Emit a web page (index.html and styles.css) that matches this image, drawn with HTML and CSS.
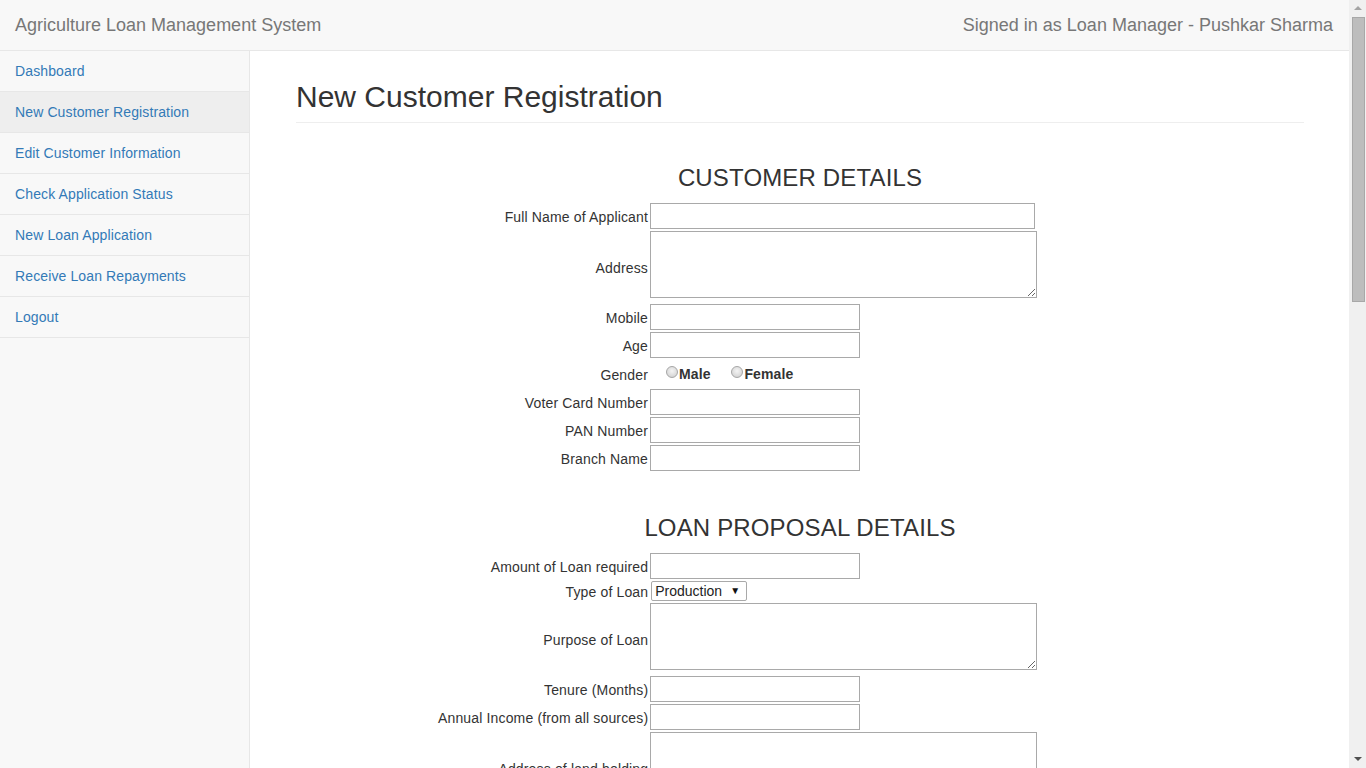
FILE: index.html
```html
<!DOCTYPE html>
<html lang="en">
<head>
<meta charset="utf-8">
<title>Agriculture Loan Management System</title>
<link rel="stylesheet" href="styles.css">
</head>
<body>
<header class="navbar">
  <span class="brand">Agriculture Loan Management System</span>
  <span class="signed">Signed in as Loan Manager - Pushkar Sharma</span>
</header>
<div class="layout">
  <nav class="sidebar">
    <ul class="nav">
      <li><a href="#">Dashboard</a></li>
      <li class="active"><a href="#">New Customer Registration</a></li>
      <li><a href="#">Edit Customer Information</a></li>
      <li><a href="#">Check Application Status</a></li>
      <li><a href="#">New Loan Application</a></li>
      <li><a href="#">Receive Loan Repayments</a></li>
      <li><a href="#">Logout</a></li>
    </ul>
  </nav>
  <main class="main">
    <h2 class="page-header">New Customer Registration</h2>
    <form class="reg-form">
      <h3 class="section-title">CUSTOMER DETAILS</h3>
      <table class="form-table">
        <tr><td class="lbl">Full Name of Applicant</td><td><input class="inp wide" type="text"></td></tr>
        <tr><td class="lbl">Address</td><td><textarea class="area"></textarea></td></tr>
        <tr><td class="lbl">Mobile</td><td><input class="inp" type="text"></td></tr>
        <tr><td class="lbl">Age</td><td><input class="inp" type="text"></td></tr>
        <tr class="gender-row"><td class="lbl">Gender</td><td class="radios">
          <label class="radio"><input type="radio" name="g">Male</label>
          <label class="radio"><input type="radio" name="g">Female</label>
        </td></tr>
        <tr><td class="lbl">Voter Card Number</td><td><input class="inp" type="text"></td></tr>
        <tr><td class="lbl">PAN Number</td><td><input class="inp" type="text"></td></tr>
        <tr><td class="lbl">Branch Name</td><td><input class="inp" type="text"></td></tr>
      </table>
      <h3 class="section-title">LOAN PROPOSAL DETAILS</h3>
      <table class="form-table">
        <tr><td class="lbl">Amount of Loan required</td><td><input class="inp" type="text"></td></tr>
        <tr class="select-row"><td class="lbl">Type of Loan</td><td class="selcell">
          <span class="select-wrap"><select class="sel"><option>Production</option><option>Investment</option></select></span>
        </td></tr>
        <tr><td class="lbl">Purpose of Loan</td><td><textarea class="area"></textarea></td></tr>
        <tr><td class="lbl">Tenure (Months)</td><td><input class="inp" type="text"></td></tr>
        <tr><td class="lbl">Annual Income (from all sources)</td><td><input class="inp" type="text"></td></tr>
        <tr><td class="lbl">Address of land holding</td><td><textarea class="area"></textarea></td></tr>
        <tr><td class="lbl">Area of land (Acres)</td><td><input class="inp" type="text"></td></tr>
        <tr><td class="lbl">Crops cultivated</td><td><input class="inp" type="text"></td></tr>
        <tr><td class="lbl">Existing Loans (if any)</td><td><textarea class="area"></textarea></td></tr>
        <tr><td class="lbl">Guarantor Name</td><td><input class="inp" type="text"></td></tr>
        <tr><td class="lbl">Guarantor Address</td><td><textarea class="area"></textarea></td></tr>
        <tr><td class="lbl">Guarantor Mobile</td><td><input class="inp" type="text"></td></tr>
        <tr><td class="lbl">Remarks</td><td><textarea class="area"></textarea></td></tr>
        <tr><td class="lbl"></td><td><button class="btn" type="button">Register</button></td></tr>
      </table>
    </form>
  </main>
</div>
<div class="fake-scrollbar" aria-hidden="true">
  <span class="sb-up"></span>
  <span class="sb-thumb"></span>
  <span class="sb-down"></span>
</div>
</body>
</html>
```
FILE: styles.css
```css
html, body {
  margin: 0;
  padding: 0;
}
body {
  font-family: "Liberation Sans", Arial, sans-serif;
  font-size: 14px;
  line-height: 1.42857;
  color: #333;
  background: #fff;
  margin-right: 17px;
}
.navbar {
  height: 50px;
  box-sizing: content-box;
  background: #f8f8f8;
  border-bottom: 1px solid #e7e7e7;
  display: flex;
  align-items: center;
  justify-content: space-between;
  padding: 0 16px 0 15px;
  font-size: 18px;
  color: #777;
}
.brand, .signed {
  line-height: 20px;
  margin-top: -1px;
}
.layout {
  display: flex;
  min-height: 1893px;
}
.sidebar {
  width: 250px;
  flex: 0 0 250px;
  box-sizing: border-box;
  background: #f8f8f8;
  border-right: 1px solid #e7e7e7;
}
.nav {
  list-style: none;
  margin: 0;
  padding: 0;
}
.nav li {
  border-bottom: 1px solid #e7e7e7;
}
.nav li a {
  display: block;
  padding: 10px 15px;
  line-height: 20px;
  color: #337ab7;
  text-decoration: none;
  letter-spacing: 0.12px;
}
.nav li.active a {
  background: #eee;
}
.main {
  flex: 1;
  padding: 29px 45px 40px 46px;
}
.page-header {
  margin: 0;
  font-size: 30px;
  font-weight: 500;
  line-height: 33px;
  padding-bottom: 9px;
  border-bottom: 1px solid #eee;
  color: #333;
}
.section-title {
  margin: 42px 0 10px;
  font-size: 24px;
  font-weight: 500;
  line-height: 26px;
  text-align: center;
  color: #333;
  letter-spacing: 0.15px;
}
.form-table {
  border-collapse: separate;
  border-spacing: 2px;
  margin-left: 140px;
}
.form-table td {
  padding: 0;
  vertical-align: top;
}
.form-table td.lbl {
  width: 210px;
  text-align: right;
  vertical-align: middle;
  white-space: nowrap;
  line-height: 18px;
  padding-top: 2px;
  letter-spacing: 0.15px;
}
.inp {
  display: block;
  box-sizing: border-box;
  width: 210px;
  height: 26px;
  border: 1px solid #a9a9a9;
  padding: 2px 3px;
  font: inherit;
  margin: 0;
  background: #fff;
}
.inp.wide {
  width: 385px;
}
.area {
  display: block;
  box-sizing: border-box;
  width: 387px;
  height: 67px;
  border: 1px solid #a9a9a9;
  padding: 2px 3px;
  font: inherit;
  margin: 0 0 4px;
  resize: both;
}
.gender-row td.lbl {
  height: 25px;
}
.gender-row td.radios {
  height: 27px;
  vertical-align: middle;
  line-height: 20px;
}
.radio {
  font-weight: bold;
  color: #333;
  margin-left: 16px;
  margin-right: 16px;
  display: inline-flex;
  align-items: center;
  letter-spacing: 0.1px;
}
.radio + .radio {
  margin-left: 1px;
}
.radio input {
  -webkit-appearance: none;
  appearance: none;
  width: 12px;
  height: 12px;
  margin: -4px 1px 0 0;
  border: 1px solid #a6a6a6;
  border-radius: 50%;
  box-sizing: border-box;
  background: radial-gradient(circle at 50% 40%, #f4f4f4 0%, #dcdcdc 60%, #c8c8c8 100%);
}
.select-row td.lbl {
  height: 18px;
}
.select-row td.selcell {
  height: 20px;
}
.select-wrap {
  position: relative;
  display: block;
  width: 96px;
  margin: 0 0 0 1px;
}
.select-wrap::after {
  content: "\25BC";
  position: absolute;
  right: 7px;
  top: 5px;
  font-size: 10px;
  line-height: 10px;
  color: #111;
  pointer-events: none;
}
.sel {
  -webkit-appearance: none;
  appearance: none;
  display: block;
  box-sizing: border-box;
  width: 96px;
  height: 20px;
  border: 1px solid #a9a9a9;
  border-radius: 2px;
  padding: 0 0 0 3px;
  font: 14px/18px "Liberation Sans", Arial, sans-serif;
  color: #222;
  background: #fff;
  margin: 0;
}
.btn {
  margin-top: 10px;
  font: inherit;
  padding: 6px 12px;
  color: #fff;
  background: #337ab7;
  border: 1px solid #2e6da4;
  border-radius: 4px;
}
.fake-scrollbar {
  position: fixed;
  top: 0;
  right: 0;
  width: 17px;
  height: 100vh;
  background: #f0f0f0;
  display: flex;
  flex-direction: column;
  align-items: center;
}
.sb-up {
  margin-top: 6px;
  width: 0;
  height: 0;
  border-left: 4px solid transparent;
  border-right: 4px solid transparent;
  border-bottom: 4px solid #a3a3a3;
}
.sb-thumb {
  margin-top: 7px;
  width: 13px;
  height: 285px;
  box-sizing: border-box;
  background: #bdbdbd;
  border: 1px solid #a8a8a8;
  margin-left: 1px;
}
.sb-down {
  margin-top: auto;
  margin-bottom: 7px;
  width: 0;
  height: 0;
  border-left: 4px solid transparent;
  border-right: 4px solid transparent;
  border-top: 4px solid #505050;
}
```
